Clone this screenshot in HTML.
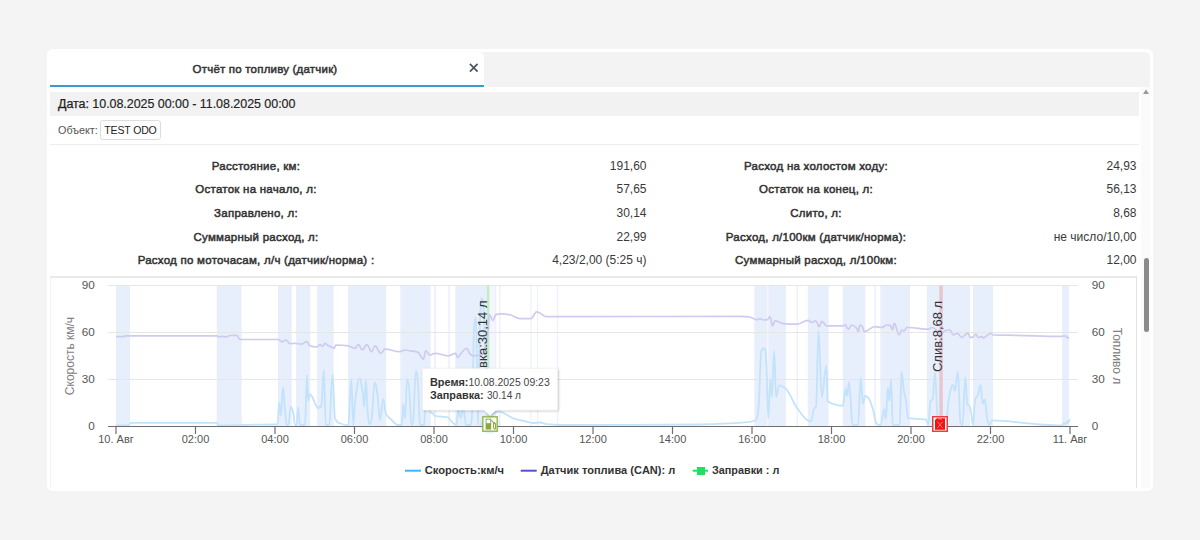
<!DOCTYPE html>
<html><head><meta charset="utf-8">
<style>
*{box-sizing:border-box}
html,body{margin:0;padding:0}
body{width:1200px;height:540px;overflow:hidden;position:relative;background:#f4f4f4;font-family:"Liberation Sans",sans-serif;color:#333}
.abs{position:absolute}
.card{left:47px;top:49px;width:1106px;height:442px;background:#fff;border-radius:6px}
.tabbar{left:50px;top:52px;width:1100px;height:35px;background:#f3f3f3;border-radius:5px 5px 0 0}
.tab{left:50px;top:52px;width:434px;height:35px;background:#fff;border-bottom:2px solid #3a9ad6;border-radius:5px 5px 0 0}
.tabtitle{left:50px;top:61px;width:430px;text-align:center;font-size:11.5px;letter-spacing:0.2px;font-weight:normal;-webkit-text-stroke:0.5px #333;color:#333;line-height:16px}
.datehdr{left:50px;top:92px;width:1089px;height:24px;background:#f2f2f2}
.datetxt{left:58px;top:96px;font-size:12.5px;line-height:16px;color:#222;letter-spacing:-0.05px;-webkit-text-stroke:0.15px #222}
.obj{left:58px;top:123px;font-size:10.8px;line-height:14px;color:#555}
.objbox{left:100px;top:120px;width:61px;height:20px;border:1px solid #ddd;border-radius:3px;font-size:10.5px;letter-spacing:-0.15px;line-height:18px;text-align:center;color:#222}
.sep{left:50px;top:144px;width:1089px;height:1px;background:#eee}
.lbl{font-size:11.5px;letter-spacing:0.25px;font-weight:normal;-webkit-text-stroke:0.5px #333;color:#333;line-height:14px;text-align:center;white-space:nowrap}
.val{font-size:12px;color:#3a3a3a;line-height:14px;text-align:right;white-space:nowrap}
.sb-track{left:1141px;top:87px;width:9px;height:401px;background:#fafafa}
.sb-thumb{left:1144px;top:258px;width:5px;height:74px;background:#8a8a8a;border-radius:3px}
</style></head><body>
<div class="abs card"></div>
<div class="abs tabbar"></div>
<div class="abs tab"></div>
<div class="abs tabtitle">Отчёт по топливу (датчик)</div>
<svg class="abs" style="left:469px;top:63px" width="9.5" height="9.5" viewBox="0 0 9.5 9.5"><path d="M0.9 0.9L8.6 8.6M8.6 0.9L0.9 8.6" stroke="#4d5262" stroke-width="1.7"/></svg>
<div class="abs sb-track"></div>
<svg class="abs" style="left:1142px;top:88px" width="8" height="7" viewBox="0 0 8 7"><path d="M1 6L4 1.5L7 6Z" fill="#999"/></svg>
<div class="abs sb-thumb"></div>
<div class="abs datehdr"></div>
<div class="abs datetxt"><span style="-webkit-text-stroke:0.25px #222">Дата:</span> 10.08.2025 00:00 - 11.08.2025 00:00</div>
<div class="abs obj">Объект:</div>
<div class="abs objbox">TEST ODO</div>
<div class="abs sep"></div>
<div class="abs lbl" style="left:56px;top:158.5px;width:400px">Расстояние, км:</div>
<div class="abs val" style="left:446.5px;top:158.5px;width:200px">191,60</div>
<div class="abs lbl" style="left:616px;top:158.5px;width:400px">Расход на холостом ходу:</div>
<div class="abs val" style="left:936.5px;top:158.5px;width:200px">24,93</div>
<div class="abs lbl" style="left:56px;top:182.4px;width:400px">Остаток на начало, л:</div>
<div class="abs val" style="left:446.5px;top:182.4px;width:200px">57,65</div>
<div class="abs lbl" style="left:616px;top:182.4px;width:400px">Остаток на конец, л:</div>
<div class="abs val" style="left:936.5px;top:182.4px;width:200px">56,13</div>
<div class="abs lbl" style="left:56px;top:206px;width:400px">Заправлено, л:</div>
<div class="abs val" style="left:446.5px;top:206px;width:200px">30,14</div>
<div class="abs lbl" style="left:616px;top:206px;width:400px">Слито, л:</div>
<div class="abs val" style="left:936.5px;top:206px;width:200px">8,68</div>
<div class="abs lbl" style="left:56px;top:229.5px;width:400px">Суммарный расход, л:</div>
<div class="abs val" style="left:446.5px;top:229.5px;width:200px">22,99</div>
<div class="abs lbl" style="left:616px;top:229.5px;width:400px">Расход, л/100км (датчик/норма):</div>
<div class="abs val" style="left:936.5px;top:229.5px;width:200px">не число/10,00</div>
<div class="abs lbl" style="left:56px;top:253px;width:400px">Расход по моточасам, л/ч (датчик/норма) :</div>
<div class="abs val" style="left:446.5px;top:253px;width:200px">4,23/2,00 (5:25 ч)</div>
<div class="abs lbl" style="left:616px;top:253px;width:400px">Суммарный расход, л/100км:</div>
<div class="abs val" style="left:936.5px;top:253px;width:200px">12,00</div>

<svg class="abs" style="left:0;top:0" width="1200" height="540" viewBox="0 0 1200 540" font-family="Liberation Sans, sans-serif">
<defs><clipPath id="cp"><rect x="50" y="270" width="1090" height="218"/></clipPath><clipPath id="plot"><rect x="116" y="285" width="954" height="142"/></clipPath><filter id="sh" x="-10%" y="-20%" width="120%" height="150%"><feDropShadow dx="1" dy="1" stdDeviation="1.2" flood-color="#000" flood-opacity="0.22"/></filter></defs>
<g clip-path="url(#cp)">
<path d="M50.5 488V278" fill="none" stroke="#f5f5f5" stroke-width="1"/><path d="M50 277H1137" stroke="#e9e9e9" stroke-width="1.8"/><path d="M1136.5 276.5V488" stroke="#e2e2e5" stroke-width="1"/>
<rect x="116" y="285.5" width="14.0" height="141" fill="#e7eefc"/>
<rect x="216.7" y="285.5" width="25.0" height="141" fill="#e7eefc"/>
<rect x="278" y="285.5" width="13.7" height="141" fill="#e7eefc"/>
<rect x="296.2" y="285.5" width="14.0" height="141" fill="#e7eefc"/>
<rect x="317.2" y="285.5" width="16.4" height="141" fill="#e7eefc"/>
<rect x="348" y="285.5" width="38.2" height="141" fill="#e7eefc"/>
<rect x="400.3" y="285.5" width="30.4" height="141" fill="#e7eefc"/>
<rect x="455.3" y="285.5" width="31.0" height="141" fill="#e7eefc"/>
<rect x="754.3" y="285.5" width="12.6" height="141" fill="#e7eefc"/>
<rect x="768.3" y="285.5" width="17.5" height="141" fill="#e7eefc"/>
<rect x="807.8" y="285.5" width="20.8" height="141" fill="#e7eefc"/>
<rect x="842.8" y="285.5" width="22.5" height="141" fill="#e7eefc"/>
<rect x="880.3" y="285.5" width="29.7" height="141" fill="#e7eefc"/>
<rect x="926.8" y="285.5" width="43.3" height="141" fill="#e7eefc"/>
<rect x="972.9" y="285.5" width="20.1" height="141" fill="#e7eefc"/>
<rect x="1062.2" y="285.5" width="6.6" height="141" fill="#e7eefc"/>
<rect x="434" y="285.5" width="1.8" height="141" fill="#e7eefc" opacity="0.8"/>
<rect x="448.3" y="285.5" width="1.7" height="141" fill="#e7eefc" opacity="0.8"/>
<rect x="495" y="285.5" width="1.2" height="141" fill="#e7eefc" opacity="0.8"/>
<rect x="499" y="285.5" width="1.5" height="141" fill="#e7eefc" opacity="0.8"/>
<rect x="530.3" y="285.5" width="1.2" height="141" fill="#e7eefc" opacity="0.8"/>
<rect x="537" y="285.5" width="1.2" height="141" fill="#e7eefc" opacity="0.8"/>
<rect x="557" y="285.5" width="1.2" height="141" fill="#e7eefc" opacity="0.8"/>
<rect x="796.6" y="285.5" width="1.4" height="141" fill="#e7eefc" opacity="0.8"/>
<rect x="874.3" y="285.5" width="1.5" height="141" fill="#e7eefc" opacity="0.8"/>
<rect x="489.5" y="285.5" width="5.5" height="141" fill="#e8edfb" opacity="0.5"/><rect x="766.9" y="285.5" width="1.4" height="141" fill="#e8edfb" opacity="0.45"/>
<path d="M108 285.5H1078" stroke="#e6e6e6" stroke-width="1"/>
<path d="M108 332.5H1078" stroke="#e6e6e6" stroke-width="1"/>
<path d="M108 379.5H1078" stroke="#e6e6e6" stroke-width="1"/>
<rect x="486.5" y="285.5" width="3" height="141" fill="#c8ebc8"/>
<rect x="939.3" y="285.5" width="3.5" height="141" fill="#e8c6d0"/>
<path d="M116.00 425.50 C116.00 425.50 123.80 425.50 129.00 425.20 C129.60 424.90 129.90 422.80 130.50 422.80 C164.98 422.80 182.22 422.80 216.70 422.80 C217.30 422.80 217.60 425.50 218.20 425.50 C241.60 425.50 253.30 424.30 276.70 424.30 C277.02 424.30 277.18 424.70 277.50 424.70 C278.18 424.70 278.52 402.50 279.20 402.50 C279.84 402.50 280.16 415.80 280.80 415.80 C281.68 415.80 282.12 387.50 283.00 387.50 C283.80 387.50 284.20 401.89 285.00 410.00 C285.68 416.89 286.02 425.00 286.70 425.00 C287.34 425.00 287.66 425.00 288.30 425.00 C289.30 425.00 289.80 406.70 290.80 406.70 C291.80 406.70 292.30 408.94 293.30 413.30 C293.98 416.26 294.32 425.00 295.00 425.00 C295.68 425.00 296.02 425.00 296.70 425.00 C297.22 425.00 297.48 407.50 298.00 407.50 C298.80 407.50 299.20 425.00 300.00 425.00 C302.00 425.00 303.00 425.00 305.00 425.00 C305.80 425.00 306.20 375.00 307.00 375.00 C307.52 375.00 307.78 400.80 308.30 400.80 C308.86 400.80 309.14 394.20 309.70 394.20 C310.82 394.20 311.38 395.52 312.50 397.50 C313.82 399.84 314.48 402.54 315.80 405.00 C316.80 406.86 317.30 408.30 318.30 408.30 C318.98 408.30 319.32 405.80 320.00 405.80 C320.52 405.80 320.78 407.50 321.30 407.50 C322.30 407.50 322.80 370.00 323.80 370.00 C324.60 370.00 325.00 425.00 325.80 425.00 C327.16 425.00 327.84 425.00 329.20 425.00 C330.52 425.00 331.18 374.70 332.50 374.70 C333.50 374.70 334.00 413.30 335.00 418.30 C337.00 423.30 338.00 422.25 340.00 423.30 C343.32 425.05 344.98 425.30 348.30 425.30 C349.50 425.30 350.10 379.20 351.30 379.20 C352.10 379.20 352.50 425.00 353.30 425.00 C353.98 425.00 354.32 406.66 355.00 401.70 C356.88 387.98 357.82 378.30 359.70 378.30 C360.82 378.30 361.38 384.63 362.50 391.70 C363.18 395.99 363.52 406.70 364.20 406.70 C364.84 406.70 365.16 380.00 365.80 380.00 C366.48 380.00 366.82 401.16 367.50 410.00 C368.18 418.84 368.52 424.20 369.20 424.20 C370.20 424.20 370.70 424.20 371.70 418.30 C372.90 412.40 373.50 382.50 374.70 382.50 C375.82 382.50 376.38 387.08 377.50 395.00 C378.50 402.08 379.00 420.00 380.00 420.00 C381.32 420.00 381.98 399.20 383.30 399.20 C384.30 399.20 384.80 410.45 385.80 413.30 C387.48 418.09 388.32 416.73 390.00 418.30 C393.32 421.41 394.98 425.00 398.30 425.00 C399.66 425.00 400.34 425.00 401.70 425.00 C402.34 425.00 402.66 404.20 403.30 404.20 C403.98 404.20 404.32 418.30 405.00 418.30 C405.80 418.30 406.20 379.20 407.00 379.20 C407.88 379.20 408.32 381.42 409.20 390.00 C410.20 399.74 410.70 425.00 411.70 425.00 C412.34 425.00 412.66 425.00 413.30 420.00 C414.30 415.00 414.80 370.80 415.80 370.80 C416.68 370.80 417.12 371.94 418.00 383.30 C418.80 393.62 419.20 425.00 420.00 425.00 C421.68 425.00 422.52 425.00 424.20 425.00 C424.52 425.00 424.68 412.53 425.00 410.00 C426.20 400.53 426.80 395.00 428.00 395.00 C428.80 395.00 429.20 410.70 430.00 412.00 C431.00 413.30 431.50 412.54 432.50 413.30 C433.50 414.06 434.00 415.53 435.00 415.80 C440.32 417.21 442.98 415.80 448.30 417.50 C449.66 419.20 450.34 420.42 451.70 421.70 C453.54 423.42 454.46 425.00 456.30 425.00 C457.10 425.00 457.50 410.00 458.30 410.00 C459.30 410.00 459.80 418.00 460.80 418.00 C461.80 418.00 462.30 406.70 463.30 406.70 C464.38 406.70 464.92 425.00 466.00 425.00 C467.60 425.00 468.40 425.00 470.00 425.00 C470.80 425.00 471.20 425.00 472.00 415.00 C472.80 405.00 473.20 342.00 474.00 330.00 C474.80 318.00 475.20 318.00 476.00 318.00 C476.80 318.00 477.20 425.00 478.00 425.00 C478.80 425.00 479.20 341.70 480.00 320.00 C480.88 298.30 481.32 298.30 482.20 298.30 C483.08 298.30 483.52 306.45 484.40 330.00 C485.04 347.13 485.36 385.00 486.00 400.00 C486.80 415.00 487.20 415.00 488.00 415.00 C492.12 415.00 494.18 411.70 498.30 411.70 C504.30 411.70 507.30 416.19 513.30 418.30 C518.66 420.19 521.34 420.42 526.70 421.70 C529.22 422.30 530.48 423.00 533.00 423.00 C535.80 423.00 537.20 422.50 540.00 422.50 C542.68 422.50 544.02 423.87 546.70 424.20 C552.02 424.87 554.68 425.00 560.00 425.00 C616.00 425.00 644.00 425.00 700.00 424.50 C718.00 424.00 727.00 423.66 745.00 422.30 C749.28 421.98 751.42 422.30 755.70 420.30 C756.86 418.30 757.44 420.30 758.60 406.70 C759.76 393.10 760.34 352.30 761.50 350.30 C762.70 348.30 763.30 348.30 764.50 348.30 C765.26 348.30 765.64 349.88 766.40 363.90 C767.16 377.92 767.54 418.40 768.30 418.40 C769.10 418.40 769.50 379.50 770.30 379.50 C770.90 379.50 771.20 397.00 771.80 397.00 C772.76 397.00 773.24 351.30 774.20 351.30 C774.96 351.30 775.34 397.00 776.10 397.00 C777.26 397.00 777.84 385.30 779.00 385.30 C780.96 385.30 781.94 385.30 783.90 387.30 C789.34 389.30 792.06 401.90 797.50 408.70 C802.94 415.50 805.66 421.30 811.10 421.30 C812.30 421.30 812.90 410.40 814.10 408.70 C814.86 407.00 815.24 408.70 816.00 407.00 C817.00 405.30 817.50 330.80 818.50 330.80 C819.82 330.80 820.48 397.00 821.80 397.00 C823.60 397.00 824.50 365.90 826.30 365.90 C826.86 365.90 827.14 397.00 827.70 400.90 C831.18 404.80 832.92 403.69 836.40 404.80 C838.96 405.61 840.24 405.70 842.80 405.70 C843.92 405.70 844.48 389.00 845.60 389.00 C846.16 389.00 846.44 396.00 847.00 396.00 C847.80 396.00 848.20 382.10 849.00 382.10 C849.56 382.10 849.84 389.82 850.40 396.70 C851.24 407.02 851.66 425.10 852.50 425.10 C854.70 425.10 855.80 425.10 858.00 425.10 C859.12 425.10 859.68 377.90 860.80 377.90 C861.64 377.90 862.06 403.60 862.90 403.60 C863.74 403.60 864.16 396.00 865.00 396.00 C866.12 396.00 866.68 396.00 867.80 397.40 C870.00 398.80 871.10 403.79 873.30 410.60 C874.42 414.07 874.98 421.10 876.10 423.10 C877.78 425.10 878.62 425.10 880.30 425.10 C881.94 425.10 882.76 409.20 884.40 409.20 C884.96 409.20 885.24 419.00 885.80 419.00 C886.64 419.00 887.06 387.60 887.90 387.60 C888.46 387.60 888.74 401.00 889.30 401.00 C890.02 401.00 890.38 379.30 891.10 379.30 C891.78 379.30 892.12 425.10 892.80 425.10 C895.56 425.10 896.94 425.10 899.70 425.10 C900.42 425.10 900.78 371.70 901.50 371.70 C902.46 371.70 902.94 384.89 903.90 391.10 C904.74 396.53 905.16 395.38 906.00 400.80 C906.84 406.22 907.26 416.80 908.10 418.20 C915.30 419.60 918.90 418.20 926.10 419.60 C926.94 421.00 927.36 424.40 928.20 424.40 C929.16 424.40 929.64 402.20 930.60 400.80 C931.40 399.40 931.80 400.80 932.60 399.40 C933.56 398.00 934.04 372.40 935.00 372.40 C936.00 372.40 936.50 412.20 937.50 416.10 C938.50 420.00 939.00 419.07 940.00 420.00 C942.40 422.23 943.60 424.00 946.00 424.00 C947.04 424.00 947.56 406.78 948.60 400.80 C950.28 391.14 951.12 384.90 952.80 384.90 C953.60 384.90 954.00 391.00 954.80 391.00 C956.04 391.00 956.66 371.70 957.90 371.70 C958.90 371.70 959.40 418.30 960.40 421.70 C961.24 425.10 961.66 425.10 962.50 425.10 C963.62 425.10 964.18 377.20 965.30 377.20 C966.14 377.20 966.56 404.30 967.40 405.00 C968.20 405.70 968.60 405.00 969.40 405.70 C970.24 406.40 970.66 410.34 971.50 415.00 C972.06 418.10 972.34 425.10 972.90 425.10 C973.74 425.10 974.16 406.30 975.00 400.80 C976.12 395.30 976.68 398.48 977.80 395.30 C978.92 392.12 979.48 384.90 980.60 384.90 C981.40 384.90 981.80 403.60 982.60 403.60 C983.44 403.60 983.86 399.40 984.70 399.40 C985.54 399.40 985.96 411.20 986.80 416.00 C987.76 421.48 988.24 425.10 989.20 425.10 C990.48 425.10 991.12 420.30 992.40 420.30 C1005.44 420.30 1011.96 421.93 1025.00 423.10 C1030.76 423.61 1033.64 424.13 1039.40 424.50 C1048.48 425.09 1053.02 425.50 1062.10 425.50 C1062.86 425.50 1063.24 423.00 1064.00 423.00 C1064.60 423.00 1064.90 424.00 1065.50 424.00 C1066.10 424.00 1066.40 421.50 1067.00 421.50 C1067.40 421.50 1067.60 423.00 1068.00 423.00 C1068.64 423.00 1069.60 419.00 1069.60 419.00" fill="none" stroke="#c2e3fb" stroke-width="1.8" stroke-linejoin="round"/>
<path d="M116.00 336.70 C116.00 336.70 120.80 336.70 124.00 336.70 C124.40 336.70 124.60 335.80 125.00 335.80 C161.68 335.80 180.02 335.80 216.70 335.80 C217.62 335.80 218.08 337.00 219.00 337.00 C220.20 337.00 220.80 336.30 222.00 336.30 C223.60 336.30 224.40 336.80 226.00 336.80 C227.60 336.80 228.40 335.70 230.00 335.50 C232.68 335.30 234.02 335.30 236.70 335.30 C238.02 335.30 238.68 339.50 240.00 339.50 C255.32 339.50 262.98 339.50 278.30 339.50 C279.78 339.50 280.52 341.70 282.00 341.70 C283.60 341.70 284.40 340.00 286.00 340.00 C287.60 340.00 288.40 343.70 290.00 343.70 C292.00 343.70 293.00 343.30 295.00 343.30 C297.68 343.30 299.02 344.20 301.70 344.20 C303.70 344.20 304.70 341.70 306.70 341.70 C308.02 341.70 308.68 344.60 310.00 345.80 C312.68 347.00 314.02 347.00 316.70 347.00 C318.02 347.00 318.68 344.70 320.00 344.70 C321.00 344.70 321.50 346.30 322.50 346.30 C323.50 346.30 324.00 343.30 325.00 343.30 C326.32 343.30 326.98 345.03 328.30 345.80 C329.30 346.39 329.80 346.28 330.80 346.70 C332.16 347.28 332.84 348.30 334.20 348.30 C334.84 348.30 335.16 345.00 335.80 345.00 C340.80 345.00 343.30 345.00 348.30 345.80 C350.98 346.60 352.32 348.30 355.00 348.30 C356.32 348.30 356.98 344.70 358.30 344.70 C359.98 344.70 360.82 350.00 362.50 350.00 C364.18 350.00 365.02 344.70 366.70 344.70 C368.70 344.70 369.70 351.70 371.70 351.70 C373.02 351.70 373.68 345.80 375.00 345.80 C377.32 345.80 378.48 353.30 380.80 353.30 C382.48 353.30 383.32 349.20 385.00 349.20 C391.00 349.20 394.00 351.70 400.00 351.70 C402.00 351.70 403.00 350.00 405.00 350.00 C407.00 350.00 408.00 350.42 410.00 350.80 C413.32 351.42 414.98 350.80 418.30 352.50 C420.30 354.20 421.30 359.20 423.30 359.20 C424.30 359.20 424.80 350.80 425.80 350.80 C427.48 350.80 428.32 355.00 430.00 355.00 C432.00 355.00 433.00 353.30 435.00 353.30 C440.32 353.30 442.98 355.80 448.30 355.80 C451.30 355.80 452.80 353.30 455.80 353.30 C456.48 353.30 456.82 357.50 457.50 357.50 C459.18 357.50 460.02 354.18 461.70 352.50 C463.70 350.50 464.70 348.30 466.70 348.30 C468.02 348.30 468.68 352.60 470.00 354.20 C471.68 355.80 472.52 355.80 474.20 355.80 C476.52 355.80 477.68 355.43 480.00 355.00 C481.60 354.71 482.40 355.00 484.00 354.00 C485.60 353.00 486.40 341.49 488.00 330.00 C488.60 325.69 488.90 314.50 489.50 314.50 C490.82 314.50 491.48 320.60 492.80 320.60 C494.08 320.60 494.72 314.90 496.00 314.40 C498.28 313.90 499.42 313.90 501.70 313.90 C505.26 313.90 507.04 314.09 510.60 315.00 C514.36 315.97 516.24 318.60 520.00 318.60 C524.32 318.60 526.48 318.60 530.80 318.60 C533.16 318.60 534.34 311.90 536.70 311.90 C540.78 311.90 542.82 316.70 546.90 316.70 C624.14 316.70 662.76 316.30 740.00 316.30 C744.00 316.30 746.00 316.30 750.00 317.00 C752.68 317.70 754.02 319.70 756.70 319.70 C758.02 319.70 758.68 318.70 760.00 318.70 C761.32 318.70 761.98 320.00 763.30 320.00 C764.98 320.00 765.82 320.00 767.50 319.70 C768.50 319.40 769.00 316.70 770.00 316.70 C771.00 316.70 771.50 325.80 772.50 325.80 C773.50 325.80 774.00 320.80 775.00 320.80 C777.68 320.80 779.02 322.40 781.70 323.30 C787.70 324.20 790.70 324.20 796.70 324.20 C801.34 324.20 803.66 320.30 808.30 320.30 C809.66 320.30 810.34 322.50 811.70 322.50 C813.34 322.50 814.16 320.80 815.80 320.80 C817.16 320.80 817.84 326.70 819.20 326.70 C820.20 326.70 820.70 321.30 821.70 321.30 C823.70 321.30 824.70 325.80 826.70 325.80 C833.34 325.80 836.66 325.80 843.30 325.80 C843.98 325.80 844.32 324.70 845.00 324.70 C846.32 324.70 846.98 329.20 848.30 329.20 C849.66 329.20 850.34 325.00 851.70 325.00 C853.70 325.00 854.70 326.27 856.70 328.30 C857.34 328.95 857.66 331.70 858.30 331.70 C858.98 331.70 859.32 325.00 860.00 325.00 C861.00 325.00 861.50 325.10 862.50 326.70 C863.18 327.78 863.52 331.70 864.20 331.70 C868.52 331.70 870.68 326.70 875.00 326.70 C877.68 326.70 879.02 327.50 881.70 327.50 C883.70 327.50 884.70 325.00 886.70 325.00 C888.02 325.00 888.68 325.00 890.00 325.30 C891.00 325.60 891.50 329.70 892.50 329.70 C893.18 329.70 893.52 323.30 894.20 323.30 C896.20 323.30 897.20 335.00 899.20 335.00 C900.20 335.00 900.70 330.00 901.70 330.00 C902.70 330.00 903.20 330.80 904.20 330.80 C905.20 330.80 905.70 327.50 906.70 327.50 C907.34 327.50 907.66 327.50 908.30 327.50 C916.30 327.50 920.30 329.20 928.30 329.20 C929.66 329.20 930.34 327.50 931.70 327.50 C935.70 327.50 937.70 333.30 941.70 333.30 C943.02 333.30 943.68 331.32 945.00 330.80 C947.00 330.00 948.00 330.00 950.00 330.00 C951.32 330.00 951.98 335.00 953.30 335.00 C954.98 335.00 955.82 333.30 957.50 333.30 C959.18 333.30 960.02 337.50 961.70 337.50 C963.02 337.50 963.68 335.90 965.00 335.00 C966.32 334.10 966.98 333.00 968.30 333.00 C968.98 333.00 969.32 337.50 970.00 337.50 C971.32 337.50 971.98 337.45 973.30 336.70 C974.30 336.13 974.80 334.20 975.80 334.20 C976.80 334.20 977.30 337.50 978.30 337.50 C979.66 337.50 980.34 336.70 981.70 336.70 C982.34 336.70 982.66 338.00 983.30 338.00 C984.66 338.00 985.34 336.65 986.70 335.80 C988.34 334.77 989.16 333.30 990.80 333.30 C991.80 333.30 992.30 334.70 993.30 335.00 C1002.66 335.30 1007.34 335.12 1016.70 335.30 C1034.70 335.64 1043.70 336.30 1061.70 336.30 C1063.02 336.30 1063.68 335.80 1065.00 335.80 C1065.68 335.80 1066.02 336.60 1066.70 337.00 C1067.70 337.60 1069.20 338.30 1069.20 338.30" fill="none" stroke="#cfcbef" stroke-width="1.7" stroke-linejoin="round"/>
<path d="M108 426.5H1078" stroke="#6e6e6e" stroke-width="1.2"/>
<path d="M116.0 426.5V434" stroke="#6e6e6e" stroke-width="1.2"/>
<path d="M195.5 426.5V434" stroke="#6e6e6e" stroke-width="1.2"/>
<path d="M275.0 426.5V434" stroke="#6e6e6e" stroke-width="1.2"/>
<path d="M354.5 426.5V434" stroke="#6e6e6e" stroke-width="1.2"/>
<path d="M434.0 426.5V434" stroke="#6e6e6e" stroke-width="1.2"/>
<path d="M513.5 426.5V434" stroke="#6e6e6e" stroke-width="1.2"/>
<path d="M593.0 426.5V434" stroke="#6e6e6e" stroke-width="1.2"/>
<path d="M672.5 426.5V434" stroke="#6e6e6e" stroke-width="1.2"/>
<path d="M752.0 426.5V434" stroke="#6e6e6e" stroke-width="1.2"/>
<path d="M831.5 426.5V434" stroke="#6e6e6e" stroke-width="1.2"/>
<path d="M911.0 426.5V434" stroke="#6e6e6e" stroke-width="1.2"/>
<path d="M990.5 426.5V434" stroke="#6e6e6e" stroke-width="1.2"/>
<path d="M1070.0 426.5V434" stroke="#6e6e6e" stroke-width="1.2"/>
<text x="116.0" y="443.2" font-size="11" fill="#555" text-anchor="middle">10. Авг</text>
<text x="195.5" y="443.2" font-size="11" fill="#555" text-anchor="middle">02:00</text>
<text x="275.0" y="443.2" font-size="11" fill="#555" text-anchor="middle">04:00</text>
<text x="354.5" y="443.2" font-size="11" fill="#555" text-anchor="middle">06:00</text>
<text x="434.0" y="443.2" font-size="11" fill="#555" text-anchor="middle">08:00</text>
<text x="513.5" y="443.2" font-size="11" fill="#555" text-anchor="middle">10:00</text>
<text x="593.0" y="443.2" font-size="11" fill="#555" text-anchor="middle">12:00</text>
<text x="672.5" y="443.2" font-size="11" fill="#555" text-anchor="middle">14:00</text>
<text x="752.0" y="443.2" font-size="11" fill="#555" text-anchor="middle">16:00</text>
<text x="831.5" y="443.2" font-size="11" fill="#555" text-anchor="middle">18:00</text>
<text x="911.0" y="443.2" font-size="11" fill="#555" text-anchor="middle">20:00</text>
<text x="990.5" y="443.2" font-size="11" fill="#555" text-anchor="middle">22:00</text>
<text x="1070.0" y="443.2" font-size="11" fill="#555" text-anchor="middle">11. Авг</text>
<text x="94.7" y="288.6" font-size="11.7" fill="#555" text-anchor="end">90</text>
<text x="1091.7" y="288.6" font-size="11.7" fill="#555">90</text>
<text x="94.7" y="335.6" font-size="11.7" fill="#555" text-anchor="end">60</text>
<text x="1091.7" y="335.6" font-size="11.7" fill="#555">60</text>
<text x="94.7" y="382.6" font-size="11.7" fill="#555" text-anchor="end">30</text>
<text x="1091.7" y="382.6" font-size="11.7" fill="#555">30</text>
<text x="94.7" y="429.6" font-size="11.7" fill="#555" text-anchor="end">0</text>
<text x="1091.7" y="429.6" font-size="11.7" fill="#555">0</text>
<text transform="translate(73.5 356) rotate(-90)" font-size="12" fill="#808080" text-anchor="middle">Скорость км/ч</text>
<text transform="translate(1112.5 356) rotate(90)" font-size="12" fill="#808080" text-anchor="middle">Топливо л</text>
<g clip-path="url(#plot)"><text transform="translate(487.4 300.5) rotate(-90)" font-size="13" fill="#333" text-anchor="end">Заправка:30,14 л</text>
<text transform="translate(941.5 300.8) rotate(-90)" font-size="13" fill="#333" text-anchor="end">Слив:8,68 л</text></g>
<circle cx="490" cy="424" r="10" fill="#22dd66" opacity="0.12"/>
<g transform="translate(482 416)"><rect x="0.8" y="0.8" width="14.4" height="14.4" fill="#fff" stroke="#98b95a" stroke-width="1.5"/><path d="M3.6 2.6H9.2V13.6H3.6Z" fill="#8aa83c"/><rect x="4.5" y="3.6" width="3.8" height="3.6" fill="#fff"/><path d="M9.2 4L11.6 6.6V11.6Q11.6 13.2 12.7 13.2Q13.6 13.2 13.6 11.8V8.2L12.4 6.4" fill="none" stroke="#8aa83c" stroke-width="1.1"/></g>
<g transform="translate(932 416)"><rect x="0.75" y="0.75" width="14.5" height="14.5" fill="#fff" stroke="#f43a3a" stroke-width="1.5"/><path d="M3 4L5 2.2H13V13.8H3Z" fill="#f21212"/><rect x="6.6" y="2.2" width="3.2" height="1.3" fill="#ff8a8a"/><path d="M5.4 5.6L10.6 12M10.6 5.6L5.4 12" stroke="#ff9c9c" stroke-width="0.7"/></g>
</g>
<g filter="url(#sh)"><path d="M422.5 368.5H557.5V410H496L490 415.5L484 410H422.5Z" fill="#fff" stroke="#eeeeee" stroke-width="0.5"/></g>
<text x="430" y="385.6" font-size="11" fill="#333"><tspan font-weight="bold" textLength="38.5" lengthAdjust="spacingAndGlyphs">Время:</tspan><tspan x="468.5" fill="#444" textLength="81.2" lengthAdjust="spacingAndGlyphs">10.08.2025 09:23</tspan></text>
<text x="430" y="398.8" font-size="11" fill="#333"><tspan font-weight="bold" textLength="53.7" lengthAdjust="spacingAndGlyphs">Заправка:</tspan><tspan x="487" fill="#444" textLength="34" lengthAdjust="spacingAndGlyphs">30.14 л</tspan></text>
<path d="M405 470.7H421" stroke="#45b4f2" stroke-width="2"/>
<text x="424.7" y="474.1" font-size="11" font-weight="bold" fill="#333" textLength="79.3" lengthAdjust="spacingAndGlyphs">Скорость:км/ч</text>
<path d="M520.7 470.7H536.7" stroke="#5a50cc" stroke-width="2"/>
<text x="540.7" y="474.1" font-size="11" font-weight="bold" fill="#333" textLength="134.6" lengthAdjust="spacingAndGlyphs">Датчик топлива (CAN): л</text>
<path d="M692.7 470.7H708" stroke="#22dd66" stroke-width="2"/><rect x="697" y="467" width="8" height="8" fill="#22dd66"/>
<text x="712" y="474.1" font-size="11" font-weight="bold" fill="#333" textLength="67.3" lengthAdjust="spacingAndGlyphs">Заправки : л</text>
</svg>
</body></html>
